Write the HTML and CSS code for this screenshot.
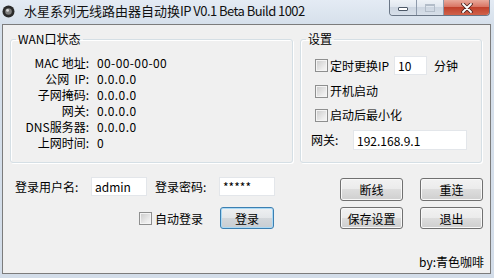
FILE: index.html
```html
<!DOCTYPE html>
<html lang="zh-CN">
<head>
  <meta charset="UTF-8" />
  <title>水星系列无线路由器自动换IP</title>
  <link rel="stylesheet" href="styles.css">
</head>
<body>
  <div class="window">
    <div class="titlebar">
      <svg class="app-icon" width="13" height="13" viewBox="0 0 13 13">
        <circle cx="6.5" cy="6.5" r="6" fill="#2a2a2a" />
        <circle cx="6.5" cy="6.5" r="3.3" fill="#7d7d7d" />
        <circle cx="5.6" cy="5.4" r="1.4" fill="#d8d8d8" />
      </svg>
      <span class="title">水星系列无线路由器自动换<span class="ver">IP V0.1 Beta Build 1002</span></span>
      <div class="caption-btns">
        <span class="cap min"><i></i></span>
        <span class="cap max"><i></i></span>
        <span class="cap close">
          <svg width="12" height="10" viewBox="0 0 12 10">
            <path d="M2 1 L10 9 M10 1 L2 9" stroke="#4a2520" stroke-width="3.6" stroke-linecap="round" />
            <path d="M2 1 L10 9 M10 1 L2 9" stroke="#fff" stroke-width="1.8" stroke-linecap="round" />
          </svg>
        </span>
      </div>
    </div>

    <div class="client">
      <div class="groups">
        <fieldset class="group wan">
          <legend>WAN口状态</legend>
          <div class="info">
            <span class="lbl">MAC 地址:</span><span class="val">00-00-00-00</span>
            <span class="lbl">公网  IP:</span><span class="val">0.0.0.0</span>
            <span class="lbl">子网掩码:</span><span class="val">0.0.0.0</span>
            <span class="lbl">网关:</span><span class="val">0.0.0.0</span>
            <span class="lbl">DNS服务器:</span><span class="val">0.0.0.0</span>
            <span class="lbl">上网时间:</span><span class="val">0</span>
          </div>
        </fieldset>

        <fieldset class="group settings">
          <legend>设置</legend>
          <div class="opt first">
            <span class="chk"></span>
            <span class="opt-label">定时更换IP</span>
            <input class="edit minutes" type="text" value="10">
            <span class="unit">分钟</span>
          </div>
          <div class="opt"><span class="chk"></span><span>开机启动</span></div>
          <div class="opt"><span class="chk"></span><span>启动后最小化</span></div>
          <div class="opt gw">
            <span class="gw-label">网关:</span>
            <input class="edit gateway" type="text" value="192.168.9.1">
          </div>
        </fieldset>
      </div>

      <div class="bottom">
        <div class="login">
          <div class="row">
            <span class="user-label">登录用户名:</span>
            <input class="edit short" type="text" value="admin">
            <span class="pass-label">登录密码:</span>
            <input class="edit short" type="text" value="*****">
          </div>
          <div class="row second">
            <span class="chk auto"></span>
            <span class="auto-label">自动登录</span>
            <button class="btn focused">登录</button>
          </div>
        </div>

        <div class="actions">
          <div class="btn-grid">
            <button class="btn">断线</button>
            <button class="btn">重连</button>
            <button class="btn">保存设置</button>
            <button class="btn">退出</button>
          </div>
          <div class="sign">by:青色咖啡</div>
        </div>
      </div>
    </div>
  </div>
</body>
</html>
```

FILE: styles.css
```css
* {
  box-sizing: border-box;
}

body {
  margin: 0;
  font-family: "Noto Sans CJK SC", sans-serif;
  font-size: 12px;
  color: #000;
  background: #d6e0eb;
}

.window {
  width: 494px;
  height: 278px;
  background: linear-gradient(#e4ebf4, #d6e0eb 24px, #d3dde9);
  display: flex;
  flex-direction: column;
}

/* title bar */
.titlebar {
  height: 24px;
  display: flex;
  align-items: center;
  padding-left: 2px;
}

.app-icon {
  margin-right: 9px;
  margin-top: -2px;
}

.title {
  font-size: 13px;
  line-height: 16px;
  margin-top: -3px;
  color: #111;
}

.ver {
  letter-spacing: -0.55px;
}

.caption-btns {
  margin-left: auto;
  margin-right: 4px;
  align-self: flex-start;
  display: flex;
  height: 16px;
  border: 1px solid #6a7686;
  border-top: none;
  border-radius: 0 0 4px 4px;
  overflow: hidden;
}

.cap {
  display: flex;
  align-items: center;
  justify-content: center;
  height: 100%;
}

.cap.min,
.cap.max {
  width: 27px;
  background: linear-gradient(#eef2f7, #dfe6ee 50%, #cdd6e1 50%, #d7dfe9);
  border-right: 1px solid #8e9aab;
}

.cap.min i {
  width: 10px;
  height: 4px;
  margin-top: 3px;
  background: #fff;
  border: 1px solid #4c5867;
  border-radius: 1px;
}

.cap.max i {
  width: 10px;
  height: 8px;
  border: 1px solid #b3bdc9;
  border-top-width: 2px;
}

.cap.close {
  width: 45px;
  background: linear-gradient(#e9a99b, #d7705e 50%, #c1412c 50%, #d0624a);
}

/* client area */
.client {
  flex: 1;
  margin: 0 3px 4px 2px;
  background: #f0f0f0;
  border: 1px solid #7c7c7c;
}

.groups {
  display: flex;
  gap: 7px;
  margin: 7px 0 0 7px;
}

.group {
  margin: 0;
  padding: 0;
  height: 131px;
  border: 1px solid #d5dfe5;
  border-radius: 3px;
  box-shadow: inset 1px 1px 0 #fff, 1px 1px 0 #fff;
}

.group legend {
  margin-left: 5px;
  padding: 0 2px;
  line-height: 14px;
}

.wan {
  width: 283px;
}

.settings {
  width: 182px;
}

.info {
  display: grid;
  grid-template-columns: 78px auto;
  grid-auto-rows: 16px;
  column-gap: 8px;
  margin-top: 9px;
  line-height: 16px;
}

.lbl {
  text-align: right;
  white-space: pre;
}

.val {
  letter-spacing: 0.4px;
}

/* settings group */
.opt {
  display: flex;
  align-items: center;
  height: 16px;
  margin-top: 8px;
  padding-left: 14px;
  line-height: 16px;
}

.opt.first {
  height: 19px;
  margin-top: 10px;
}

.opt.gw {
  height: 20px;
  margin-top: 7px;
  padding-left: 10px;
}

.chk {
  width: 13px;
  height: 13px;
  margin-right: 2px;
  border: 1px solid #8e8f8f;
  background: linear-gradient(135deg, #c9c9c9, #ededed 70%, #f6f6f6);
  box-shadow: inset 0 0 0 1px #f4f4f4;
  flex: none;
}

.opt-label {
  width: 64px;
}

.unit {
  margin-left: 7px;
}

.gw-label {
  width: 42px;
}

.edit {
  font: inherit;
  font-size: 12px;
  color: #000;
  background: #fff;
  border: 1px solid #e3e6ea;
  padding: 0 3px;
  outline: none;
  height: 19px;
}

.minutes {
  width: 33px;
}

.gateway {
  width: 114px;
  height: 20px;
}

/* bottom area */
.bottom {
  display: flex;
  margin-top: 14px;
}

.login {
  width: 337px;
  padding-left: 12px;
}

.row {
  display: flex;
  align-items: center;
  height: 19px;
}

.row.second {
  height: 22px;
  margin-top: 11px;
}

.user-label {
  width: 76px;
}

.pass-label {
  width: 64px;
  margin-left: 8px;
}

.short {
  width: 56px;
}

.chk.auto {
  margin-left: 124px;
  margin-right: 3px;
}

.auto-label {
  width: 48px;
}

.btn {
  font: inherit;
  font-size: 12px;
  color: #000;
  height: 22px;
  padding: 0;
  border: 1px solid #707070;
  border-radius: 3px;
  background: linear-gradient(#f2f2f2, #ebebeb 50%, #dddddd 50%, #cfcfcf);
  box-shadow: inset 0 0 0 1px #f8f8f8;
}

.btn.focused {
  width: 54px;
  margin-left: 17px;
  border-color: #3c7fb1;
  box-shadow: inset 0 0 0 1px #a9d9f5;
  background: linear-gradient(#eef0f2, #e3e6e9 50%, #d3d7db 50%, #c8cdd2);
}

.actions {
  padding-top: 1px;
}

.btn-grid {
  display: grid;
  grid-template-columns: 63px 63px;
  grid-template-rows: 23px 22px;
  column-gap: 17px;
  row-gap: 6px;
}

.btn-grid .btn {
  height: 100%;
}

.sign {
  margin-top: 26px;
  line-height: 14px;
  text-align: right;
  margin-right: -1px;
}
```
